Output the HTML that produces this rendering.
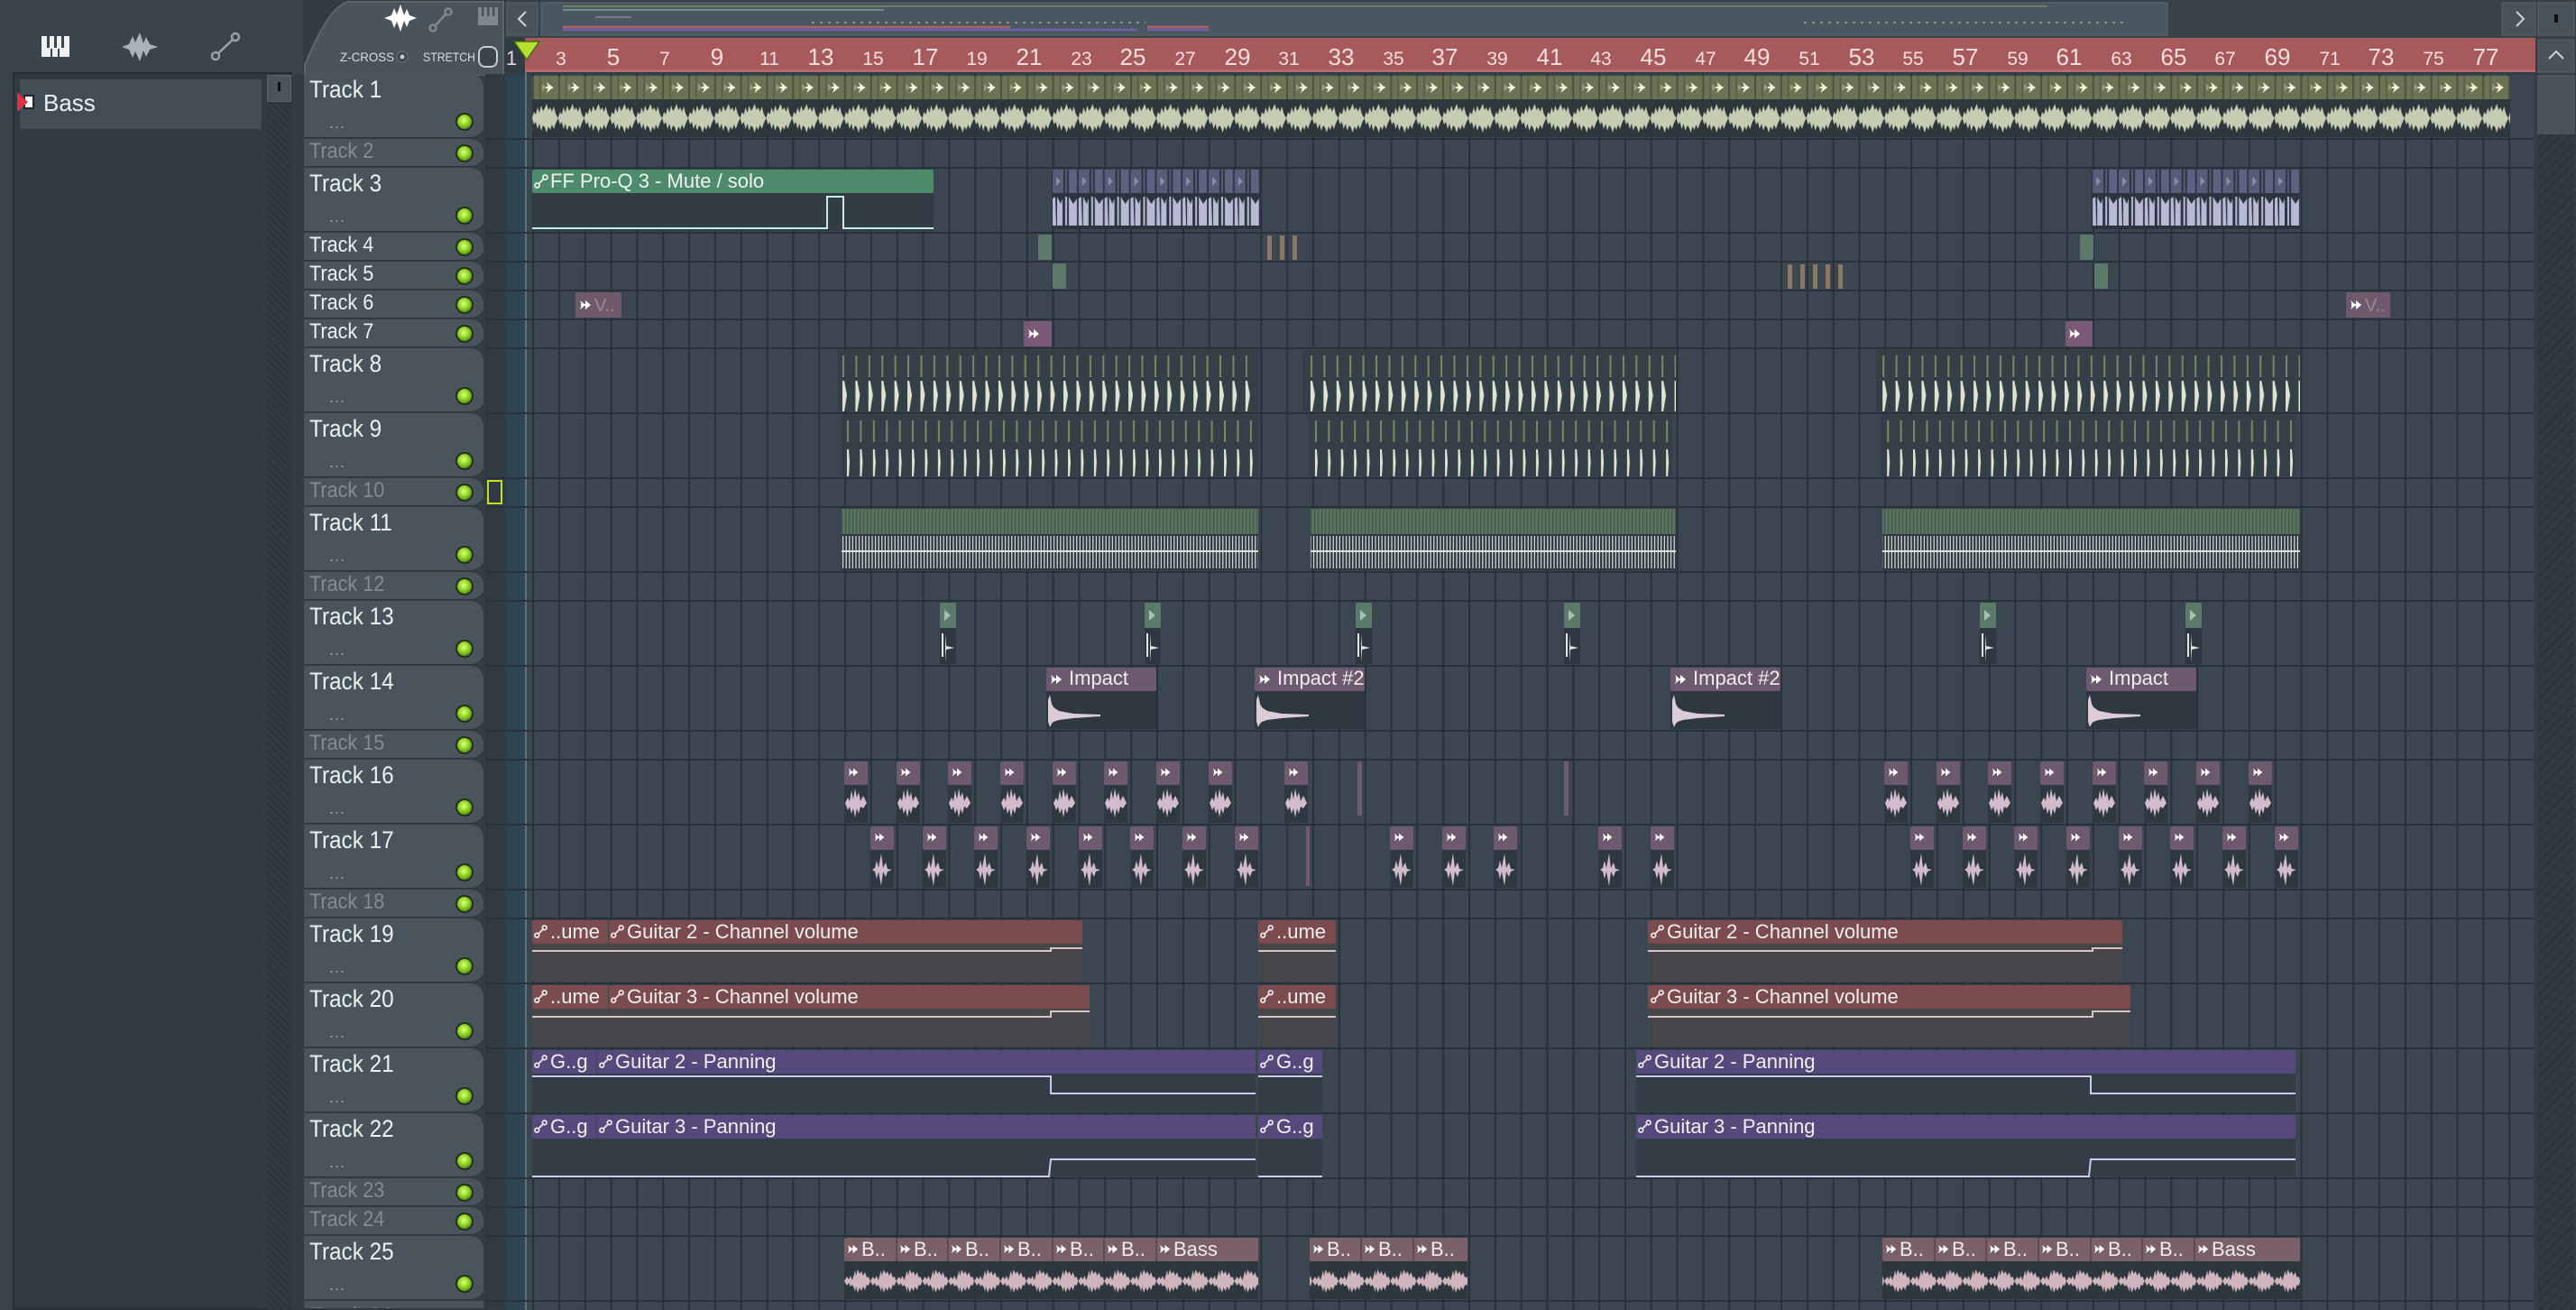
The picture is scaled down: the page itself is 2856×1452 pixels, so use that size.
<!DOCTYPE html>
<html style="overflow:hidden;width:2856px;height:1452px"><head><meta charset="utf-8">
<style>
*{margin:0;padding:0;box-sizing:border-box}
body{width:2856px;height:1452px;overflow:hidden;background:#323c45;font-family:"Liberation Sans Narrow","Liberation Sans",sans-serif;position:relative}
.a{position:absolute}
.th{position:absolute;left:337px;width:199px;background:#4a545c;border-radius:0 14px 14px 0;border-bottom:2px solid #2f383f;overflow:hidden}
.th span{position:absolute;left:6px;top:4px;font-size:27px;color:#eef0f0;line-height:1;transform:scaleX(0.9);transform-origin:0 0}
.th.s span{top:2px;font-size:24px}
.th.d span{color:#838c92}
.th i{position:absolute;left:168px;width:20px;height:20px;border-radius:50%;background:radial-gradient(circle at 45% 40%,#d8ff80 0,#9ee030 35%,#4f8a10 80%);border:2px solid #24301a}
.th b{position:absolute;left:28px;font-size:18px;color:#9aa3a8;font-weight:normal;letter-spacing:1px}
</style></head><body>
<div class="a" style="left:0;top:0;width:336px;height:82px;background:#3a444d"></div>
<div class="a" style="left:0;top:0;width:14px;height:1452px;background:#3a444d"></div>
<div class="a" style="left:14px;top:80px;width:310px;height:1372px;background:#303a43;border:2px solid #262e35"></div>
<div class="a" style="left:295px;top:82px;width:29px;height:1370px;background:repeating-linear-gradient(45deg,#2c353d 0 3px,#323b43 3px 6px)"></div>
<div class="a" style="left:296px;top:83px;width:27px;height:30px;background:#4a545c;border:1px solid #5a646c"></div>
<div class="a" style="left:308px;top:91px;width:3px;height:10px;background:#111"></div>
<div class="a" style="left:22px;top:88px;width:268px;height:55px;background:#434d56"></div>
<div class="a" style="left:48px;top:99px;font-size:26px;color:#eef0f0">Bass</div>
<div class="a" style="left:26px;top:105px;width:12px;height:16px;background:#fff;border:2px solid #222"></div>
<svg class="a" style="left:0;top:0" width="340" height="150">
<polygon points="19,102 31,113 19,124" fill="#e0304a"/>
<rect x="46" y="40" width="31" height="23" fill="#eef0f2"/>
<g fill="#3a444d"><rect x="52" y="40" width="3" height="13"/><rect x="60" y="40" width="3" height="13"/><rect x="68" y="40" width="3" height="13"/><rect x="56" y="54" width="2" height="9"/><rect x="64" y="54" width="2" height="9"/></g>
<path d="M135,52 L143,49 L147,40 L150,47 L155,36 L159,48 L162,41 L166,49 L175,52 L166,55 L162,63 L159,56 L155,68 L150,57 L147,64 L143,55 Z" fill="#aab3b8"/>
<g stroke="#98a2a8" stroke-width="2.5" fill="none"><circle cx="239" cy="62" r="4"/><circle cx="261" cy="41" r="4"/><line x1="242" y1="59" x2="258" y2="44"/></g>
</svg>
<svg class="a" style="left:330px;top:0" width="240" height="84" font-family="Liberation Sans Narrow,Liberation Sans,sans-serif">
<path d="M8,84 L8,72 Q30,18 48,6 Q52,2 60,2 L228,2 L228,84 Z" fill="#49535c" stroke="#5c666e" stroke-width="2"/>
<path d="M96,20 L104,17 L107,9 L110,16 L114,5 L118,17 L121,10 L124,17 L132,20 L124,23 L121,30 L118,23 L114,35 L110,24 L107,31 L104,23 Z" fill="#fff"/>
<g stroke="#7e888e" stroke-width="2.5" fill="none"><circle cx="150" cy="31" r="3.5"/><circle cx="167" cy="13" r="3.5"/><line x1="153" y1="28" x2="164" y2="16"/></g>
<rect x="200" y="8" width="22" height="20" fill="#7e888e"/><g fill="#49535c"><rect x="204" y="8" width="2.5" height="10"/><rect x="210" y="8" width="2.5" height="10"/><rect x="216" y="8" width="2.5" height="10"/></g>
<text x="47" y="68" font-size="14" fill="#d8dde0" textLength="60" lengthAdjust="spacingAndGlyphs">Z-CROSS</text>
<circle cx="116" cy="63" r="6" fill="#3a444c" stroke="#6c767c"/><circle cx="116" cy="63" r="2.5" fill="#c8ccd0"/>
<text x="139" y="68" font-size="14" fill="#d8dde0" textLength="58" lengthAdjust="spacingAndGlyphs">STRETCH</text>
<rect x="201" y="52" width="20" height="22" rx="7" fill="#3a444c" stroke="#c8ccd0" stroke-width="2"/>
</svg>
<div class="th" style="top:82px;height:72px"><span>Track 1</span><b style="top:44px">...</b><i style="top:43px"></i></div>
<div class="th s d" style="top:154px;height:32px"><span>Track 2</span><i style="top:6px"></i></div>
<div class="th" style="top:186px;height:72px"><span>Track 3</span><b style="top:44px">...</b><i style="top:43px"></i></div>
<div class="th s" style="top:258px;height:32px"><span>Track 4</span><i style="top:6px"></i></div>
<div class="th s" style="top:290px;height:32px"><span>Track 5</span><i style="top:6px"></i></div>
<div class="th s" style="top:322px;height:32px"><span>Track 6</span><i style="top:6px"></i></div>
<div class="th s" style="top:354px;height:32px"><span>Track 7</span><i style="top:6px"></i></div>
<div class="th" style="top:386px;height:72px"><span>Track 8</span><b style="top:44px">...</b><i style="top:43px"></i></div>
<div class="th" style="top:458px;height:72px"><span>Track 9</span><b style="top:44px">...</b><i style="top:43px"></i></div>
<div class="th s d" style="top:530px;height:32px"><span>Track 10</span><i style="top:6px"></i></div>
<div class="th" style="top:562px;height:72px"><span>Track 11</span><b style="top:44px">...</b><i style="top:43px"></i></div>
<div class="th s d" style="top:634px;height:32px"><span>Track 12</span><i style="top:6px"></i></div>
<div class="th" style="top:666px;height:72px"><span>Track 13</span><b style="top:44px">...</b><i style="top:43px"></i></div>
<div class="th" style="top:738px;height:72px"><span>Track 14</span><b style="top:44px">...</b><i style="top:43px"></i></div>
<div class="th s d" style="top:810px;height:32px"><span>Track 15</span><i style="top:6px"></i></div>
<div class="th" style="top:842px;height:72px"><span>Track 16</span><b style="top:44px">...</b><i style="top:43px"></i></div>
<div class="th" style="top:914px;height:72px"><span>Track 17</span><b style="top:44px">...</b><i style="top:43px"></i></div>
<div class="th s d" style="top:986px;height:32px"><span>Track 18</span><i style="top:6px"></i></div>
<div class="th" style="top:1018px;height:72px"><span>Track 19</span><b style="top:44px">...</b><i style="top:43px"></i></div>
<div class="th" style="top:1090px;height:72px"><span>Track 20</span><b style="top:44px">...</b><i style="top:43px"></i></div>
<div class="th" style="top:1162px;height:72px"><span>Track 21</span><b style="top:44px">...</b><i style="top:43px"></i></div>
<div class="th" style="top:1234px;height:72px"><span>Track 22</span><b style="top:44px">...</b><i style="top:43px"></i></div>
<div class="th s d" style="top:1306px;height:32px"><span>Track 23</span><i style="top:6px"></i></div>
<div class="th s d" style="top:1338px;height:32px"><span>Track 24</span><i style="top:6px"></i></div>
<div class="th" style="top:1370px;height:72px"><span>Track 25</span><b style="top:44px">...</b><i style="top:43px"></i></div>
<div class="th d" style="top:1442px;height:10px;border-radius:0"><span>Track 26</span></div>

<svg class="a" style="left:0;top:0" width="2856" height="1452" font-family="Liberation Sans Narrow,Liberation Sans,sans-serif">
<defs>
<pattern id="bars" x="561.3" y="0" width="28.83" height="20" patternUnits="userSpaceOnUse"><rect x="0" y="0" width="2" height="20" fill="#283038"/></pattern>
<pattern id="hatch" x="0" y="0" width="8" height="8" patternUnits="userSpaceOnUse" patternTransform="rotate(45)"><rect width="8" height="8" fill="#323b43"/><rect width="4" height="8" fill="#2c353d"/></pattern>
<pattern id="t1h" x="590" y="84" width="28.83" height="26" patternUnits="userSpaceOnUse"><rect width="28.83" height="26" fill="#6c7355"/><rect x="0" width="2" height="26" fill="#4c5240"/><rect x="8" width="1.5" height="26" fill="#565c46"/><polygon points="11,9 15,13 11,17" fill="#9a9e84"/><polygon points="16,7 23,13 16,19 18,13" fill="#fbf6dc"/><rect x="15" y="12" width="8" height="2" fill="#fbf6dc"/></pattern>
<pattern id="t1w" x="590" y="110" width="28.83" height="42" patternUnits="userSpaceOnUse"><rect width="28.83" height="42" fill="#2e383c"/><path d="M0,21 L2,14 4,17 6,9 8,15 10,7 12,13 14,10 16,5 18,12 20,9 22,14 24,8 26,16 28.8,21 26,27 24,33 22,28 20,34 18,30 16,37 14,31 12,29 10,35 8,27 6,33 4,25 2,28 Z" fill="#c6ccb2"/></pattern>
<pattern id="spk" x="929" y="388" width="14.415" height="68" patternUnits="userSpaceOnUse"><rect x="5" y="6" width="2" height="24" fill="#7e8660"/><path d="M5,34 L7,34 L10,50 L7,68 L5,68 Z" fill="#dfe3cf"/></pattern>
<pattern id="spk2" x="933" y="460" width="14.415" height="68" patternUnits="userSpaceOnUse"><rect x="6" y="6" width="2" height="24" fill="#7e8660"/><path d="M6,38 L8,38 L9,52 L8,68 L6,68 Z" fill="#dfe3cf"/></pattern>
<pattern id="t11h" x="933" y="564" width="4" height="28" patternUnits="userSpaceOnUse"><rect width="4" height="28" fill="#587060"/><rect width="1" height="28" fill="#465a4c"/></pattern>
<pattern id="t11w" x="933" y="594" width="3.6" height="36" patternUnits="userSpaceOnUse"><rect x="1" y="0" width="1.2" height="36" fill="#d4e4dc"/><rect x="0" y="16" width="3.6" height="2" fill="#d4e4dc"/></pattern>
<pattern id="pu" x="1166" y="188" width="28.83" height="66" patternUnits="userSpaceOnUse"><rect width="28.83" height="66" fill="#2c3440"/><rect x="1" y="0" width="12" height="26" fill="#585c78"/><rect x="15" y="0" width="2" height="26" fill="#585c78"/><rect x="19" y="0" width="9" height="26" fill="#5e6282"/><polygon points="5,8 10,13 5,18" fill="#8a8ea8"/><path d="M1,32 L4,30 L5,62 L1,62 Z M6,30 L10,38 L12,32 L12,62 L6,62 Z M15,30 L17,30 L17,62 L15,62 Z M19,30 L24,38 L28,32 L28,62 L19,62 Z" fill="#b8bad4"/></pattern>
<pattern id="bw" x="936" y="1398" width="28.83" height="42" patternUnits="userSpaceOnUse"><rect width="28.83" height="42" fill="#2e363e"/><path d="M0,22 L3,17 5,20 7,16 9,21 11,14 12,10 13,16 15,9 17,14 19,11 21,16 23,12 25,18 27,17 28.8,22 27,27 25,26 23,32 21,28 19,33 17,29 15,35 13,28 12,34 11,30 9,26 7,28 5,24 3,27 Z" fill="#cfb5bd"/></pattern>
<symbol id="lk" viewBox="0 0 16 16"><g stroke="#f0ecee" stroke-width="1.8" fill="none"><circle cx="3.5" cy="12.5" r="2.5"/><circle cx="12.5" cy="3.5" r="2.5"/><line x1="5.3" y1="10.7" x2="10.7" y2="5.3"/></g></symbol>
<symbol id="ar" viewBox="0 0 16 16"><polygon points="2,3 8,8 2,13 4,8" fill="#fff"/><polygon points="8,3 14,8 8,13" fill="#fff"/><rect x="3" y="7" width="10" height="2" fill="#fff"/></symbol>
<g id="p16"><rect x="0" y="0" width="26" height="26" rx="2" fill="#6e5a6e"/><use href="#ar" x="3" y="5" width="14" height="14"/><rect x="0" y="26" width="26" height="42" fill="#2f3740"/><path d="M1,46 L4,40 6,44 8,32 10,42 12,30 14,40 16,34 18,44 21,38 25,46 21,52 18,50 16,58 14,52 12,62 10,52 8,58 6,50 4,54 Z" fill="#d2bccc"/></g>
<g id="p17"><rect x="0" y="0" width="26" height="26" rx="2" fill="#6e5a6e"/><use href="#ar" x="3" y="5" width="14" height="14"/><rect x="0" y="26" width="26" height="42" fill="#2f3740"/><path d="M2,48 L5,46 7,38 9,46 12,30 14,46 17,40 19,47 24,48 19,50 17,56 14,50 12,66 9,50 7,58 5,50 Z" fill="#d2bccc"/></g>
<g id="p13"><rect x="0" y="0" width="18" height="28" rx="2" fill="#5b7a6a"/><polygon points="5,8 12,14 5,20" fill="#a8c0b4"/><rect x="0" y="28" width="18" height="40" fill="#2f3840"/><path d="M2,34 L4,34 4,60 2,60 Z M6,34 L7,48 16,50 7,52 6,66 Z" fill="#dbe8e2"/></g>
<g id="imp"><rect x="0" y="0" width="122" height="68" fill="#2f3740"/><rect x="0" y="0" width="122" height="26" rx="2" fill="#6c5a6e"/><use href="#ar" x="3" y="5" width="16" height="16"/><path d="M2,36 L4,30 6,40 8,44 14,48 30,51 60,52 60,54 30,56 14,58 8,60 6,62 4,66 2,60 Z" fill="#dcccd8"/></g>
</defs>
<rect x="538" y="82" width="23" height="1370" fill="#303a42"/>
<rect x="561" y="82" width="21" height="1370" fill="#2e4450"/>
<rect x="582" y="82" width="2228" height="1370" fill="#3c4650"/>
<rect x="582" y="82" width="2228" height="1370" fill="url(#bars)"/>
<line x1="583" y1="80" x2="583" y2="1452" stroke="#5a7480" stroke-width="2"/>
<g stroke="#29313a" stroke-width="2">
<line x1="538" y1="154" x2="2810" y2="154"/><line x1="538" y1="186" x2="2810" y2="186"/><line x1="538" y1="258" x2="2810" y2="258"/><line x1="538" y1="290" x2="2810" y2="290"/><line x1="538" y1="322" x2="2810" y2="322"/><line x1="538" y1="354" x2="2810" y2="354"/><line x1="538" y1="386" x2="2810" y2="386"/><line x1="538" y1="458" x2="2810" y2="458"/><line x1="538" y1="530" x2="2810" y2="530"/><line x1="538" y1="562" x2="2810" y2="562"/><line x1="538" y1="634" x2="2810" y2="634"/><line x1="538" y1="666" x2="2810" y2="666"/><line x1="538" y1="738" x2="2810" y2="738"/><line x1="538" y1="810" x2="2810" y2="810"/><line x1="538" y1="842" x2="2810" y2="842"/><line x1="538" y1="914" x2="2810" y2="914"/><line x1="538" y1="986" x2="2810" y2="986"/><line x1="538" y1="1018" x2="2810" y2="1018"/><line x1="538" y1="1090" x2="2810" y2="1090"/><line x1="538" y1="1162" x2="2810" y2="1162"/><line x1="538" y1="1234" x2="2810" y2="1234"/><line x1="538" y1="1306" x2="2810" y2="1306"/><line x1="538" y1="1338" x2="2810" y2="1338"/><line x1="538" y1="1370" x2="2810" y2="1370"/><line x1="538" y1="1442" x2="2810" y2="1442"/>
</g>
<rect x="541" y="533" width="15" height="25" fill="none" stroke="#c8e020" stroke-width="2"/>
<rect x="560" y="0" width="2296" height="42" fill="#38424b"/>
<rect x="562" y="3" width="34" height="36" fill="#48525a" stroke="#5a646c"/>
<path d="M583,13 L575,21 L583,29" stroke="#cfd4d8" stroke-width="2" fill="none"/>
<rect x="600" y="3" width="1803" height="36" fill="#4a5760" stroke="#5e6a72"/>
<g stroke-width="1.5"><line x1="624" y1="7" x2="2270" y2="7" stroke="#7a8a6a"/><line x1="624" y1="11" x2="980" y2="11" stroke="#7aa090"/><line x1="660" y1="19" x2="700" y2="19" stroke="#9080a0"/><line x1="900" y1="25" x2="1270" y2="25" stroke="#a0a890" stroke-dasharray="3 6"/><line x1="2000" y1="25" x2="2360" y2="25" stroke="#a0a890" stroke-dasharray="3 6"/><line x1="624" y1="30" x2="1120" y2="30" stroke="#b06060" stroke-width="2.5"/><line x1="624" y1="33" x2="1260" y2="33" stroke="#7060b0" stroke-width="2.5"/><line x1="1272" y1="30" x2="1340" y2="30" stroke="#b06060" stroke-width="2.5"/><line x1="1272" y1="33" x2="1340" y2="33" stroke="#7060b0" stroke-width="2.5"/></g>
<rect x="2774" y="3" width="37" height="36" fill="#48525a" stroke="#5a646c"/>
<path d="M2790,13 L2798,21 L2790,29" stroke="#cfd4d8" stroke-width="2" fill="none"/>
<rect x="2814" y="3" width="40" height="36" fill="#48525a" stroke="#5a646c"/>
<rect x="2832" y="16" width="4" height="9" fill="#111"/>
<rect x="582" y="42" width="2229" height="38" fill="#a65a5c"/>
<rect x="582" y="77" width="2229" height="3" fill="#b86a6c"/>
<text x="561" y="72" font-size="22" fill="#e8dadc">1</text>
<g fill="#f6dede" font-size="21" text-anchor="middle">
<text x="622" y="72">3</text><text x="680" y="72" font-size="26">5</text><text x="737" y="72">7</text><text x="795" y="72" font-size="26">9</text><text x="853" y="72">11</text><text x="910" y="72" font-size="26">13</text><text x="968" y="72">15</text><text x="1026" y="72" font-size="26">17</text><text x="1083" y="72">19</text><text x="1141" y="72" font-size="26">21</text><text x="1199" y="72">23</text><text x="1256" y="72" font-size="26">25</text><text x="1314" y="72">27</text><text x="1372" y="72" font-size="26">29</text><text x="1429" y="72">31</text><text x="1487" y="72" font-size="26">33</text><text x="1545" y="72">35</text><text x="1602" y="72" font-size="26">37</text><text x="1660" y="72">39</text><text x="1718" y="72" font-size="26">41</text><text x="1775" y="72">43</text><text x="1833" y="72" font-size="26">45</text><text x="1891" y="72">47</text><text x="1948" y="72" font-size="26">49</text><text x="2006" y="72">51</text><text x="2064" y="72" font-size="26">53</text><text x="2121" y="72">55</text><text x="2179" y="72" font-size="26">57</text><text x="2237" y="72">59</text><text x="2294" y="72" font-size="26">61</text><text x="2352" y="72">63</text><text x="2410" y="72" font-size="26">65</text><text x="2467" y="72">67</text><text x="2525" y="72" font-size="26">69</text><text x="2583" y="72">71</text><text x="2640" y="72" font-size="26">73</text><text x="2698" y="72">75</text><text x="2756" y="72" font-size="26">77</text>
</g>
<polygon points="570,46 598,46 584,66" fill="#b4e030" stroke="#4a6a10" stroke-width="1.5"/>
<rect x="2811" y="42" width="45" height="1410" fill="#333d45"/>
<rect x="2814" y="84" width="40" height="1368" fill="url(#hatch)"/>
<rect x="2814" y="44" width="40" height="36" fill="#48525a" stroke="#5a646c"/>
<path d="M2826,65 L2834,57 L2842,65" stroke="#cfd4d8" stroke-width="2" fill="none"/>
<rect x="2814" y="84" width="40" height="64" fill="#48525a" stroke="#5a646c"/>

<rect x="590" y="84" width="2193" height="26" fill="url(#t1h)"/>
<rect x="590" y="110" width="2193" height="42" fill="url(#t1w)"/>
<rect x="590" y="214" width="445" height="42" fill="#333c45"/>
<rect x="590" y="188" width="445" height="26" rx="2" fill="#4e8a6c"/>
<use href="#lk" x="592" y="193" width="16" height="16"/>
<text x="610" y="208" font-size="22" fill="#eef4f0">FF Pro-Q 3 - Mute / solo</text>
<polyline points="590,253 917,253 917,218 935,218 935,253 1035,253" fill="none" stroke="#c4ece0" stroke-width="2"/>
<rect x="1166" y="188" width="231" height="66" fill="url(#pu)"/>
<rect x="2319" y="188" width="231" height="66" fill="url(#pu)"/>
<rect x="1151" y="260" width="15" height="28" rx="2" fill="#5b7a6a"/><rect x="2306" y="260" width="15" height="28" rx="2" fill="#5b7a6a"/>
<rect x="1167" y="292" width="15" height="28" rx="2" fill="#5b7a6a"/><rect x="2322" y="292" width="15" height="28" rx="2" fill="#5b7a6a"/>
<g fill="#8a7866"><rect x="1405" y="261" width="5" height="27"/><rect x="1419" y="261" width="5" height="27"/><rect x="1433" y="261" width="5" height="27"/><rect x="1982" y="293" width="5" height="27"/><rect x="1996" y="293" width="5" height="27"/><rect x="2010" y="293" width="5" height="27"/><rect x="2024" y="293" width="5" height="27"/><rect x="2038" y="293" width="5" height="27"/></g>
<rect x="638" y="324" width="51" height="28" rx="2" fill="#6e5a6c"/><use href="#ar" x="641" y="330" width="16" height="16"/><text x="659" y="345" font-size="20" fill="#9a8a98">V..</text>
<rect x="2601" y="324" width="49" height="28" rx="2" fill="#6e5a6c"/><use href="#ar" x="2604" y="330" width="16" height="16"/><text x="2622" y="345" font-size="20" fill="#9a8a98">V..</text>
<rect x="1135" y="356" width="31" height="28" rx="2" fill="#7a5a76"/><use href="#ar" x="1138" y="362" width="16" height="16"/>
<rect x="2290" y="356" width="30" height="28" rx="2" fill="#7a5a76"/><use href="#ar" x="2292" y="362" width="16" height="16"/>
<rect x="929" y="388" width="466" height="68" fill="#353f47"/><rect x="929" y="388" width="466" height="68" fill="url(#spk)"/>
<rect x="1444" y="388" width="414" height="68" fill="#353f47"/><rect x="1444" y="388" width="414" height="68" fill="url(#spk)"/>
<rect x="2080" y="388" width="470" height="68" fill="#353f47"/><rect x="2080" y="388" width="470" height="68" fill="url(#spk)"/>
<rect x="933" y="460" width="462" height="68" fill="#353f47"/><rect x="933" y="460" width="462" height="68" fill="url(#spk2)"/>
<rect x="1450" y="460" width="404" height="68" fill="#353f47"/><rect x="1450" y="460" width="404" height="68" fill="url(#spk2)"/>
<rect x="2085" y="460" width="460" height="68" fill="#353f47"/><rect x="2085" y="460" width="460" height="68" fill="url(#spk2)"/>
<g><rect x="933" y="564" width="462" height="28" fill="url(#t11h)"/><rect x="933" y="592" width="462" height="40" fill="#2f3840"/><rect x="933" y="594" width="462" height="36" fill="url(#t11w)"/>
<rect x="1453" y="564" width="405" height="28" fill="url(#t11h)"/><rect x="1453" y="592" width="405" height="40" fill="#2f3840"/><rect x="1453" y="594" width="405" height="36" fill="url(#t11w)"/>
<rect x="2087" y="564" width="463" height="28" fill="url(#t11h)"/><rect x="2087" y="592" width="463" height="40" fill="#2f3840"/><rect x="2087" y="594" width="463" height="36" fill="url(#t11w)"/></g>
<use href="#p13" x="1042" y="668"/><use href="#p13" x="1269" y="668"/><use href="#p13" x="1503" y="668"/><use href="#p13" x="1734" y="668"/><use href="#p13" x="2195" y="668"/><use href="#p13" x="2423" y="668"/>
<use href="#imp" x="1160" y="740"/><text x="1185" y="759" font-size="22" fill="#f2eaf0">Impact</text>
<use href="#imp" x="1391" y="740"/><text x="1416" y="759" font-size="22" fill="#f2eaf0">Impact #2</text>
<use href="#imp" x="1852" y="740"/><text x="1877" y="759" font-size="22" fill="#f2eaf0">Impact #2</text>
<use href="#imp" x="2313" y="740"/><text x="2338" y="759" font-size="22" fill="#f2eaf0">Impact</text>
<use href="#p16" x="936" y="844"/><use href="#p16" x="994" y="844"/><use href="#p16" x="1051" y="844"/><use href="#p16" x="1109" y="844"/><use href="#p16" x="1167" y="844"/><use href="#p16" x="1224" y="844"/><use href="#p16" x="1282" y="844"/><use href="#p16" x="1340" y="844"/>
<use href="#p16" x="1424" y="844"/><rect x="1505" y="844" width="5" height="60" fill="#6e5a6e"/><rect x="1734" y="844" width="5" height="60" fill="#6e5a6e"/>
<use href="#p16" x="2089" y="844"/><use href="#p16" x="2147" y="844"/><use href="#p16" x="2204" y="844"/><use href="#p16" x="2262" y="844"/><use href="#p16" x="2320" y="844"/><use href="#p16" x="2377" y="844"/><use href="#p16" x="2435" y="844"/><use href="#p16" x="2493" y="844"/>
<use href="#p17" x="965" y="916"/><use href="#p17" x="1023" y="916"/><use href="#p17" x="1080" y="916"/><use href="#p17" x="1138" y="916"/><use href="#p17" x="1196" y="916"/><use href="#p17" x="1253" y="916"/><use href="#p17" x="1311" y="916"/><use href="#p17" x="1369" y="916"/>
<rect x="1448" y="916" width="4" height="66" fill="#6e5a6e"/><use href="#p17" x="1541" y="916"/><use href="#p17" x="1599" y="916"/><use href="#p17" x="1656" y="916"/><use href="#p17" x="1772" y="916"/><use href="#p17" x="1830" y="916"/>
<use href="#p17" x="2118" y="916"/><use href="#p17" x="2176" y="916"/><use href="#p17" x="2233" y="916"/><use href="#p17" x="2291" y="916"/><use href="#p17" x="2349" y="916"/><use href="#p17" x="2406" y="916"/><use href="#p17" x="2464" y="916"/><use href="#p17" x="2522" y="916"/>
<g fill="#454649"><rect x="590" y="1046" width="610" height="42"/><rect x="1395" y="1046" width="86" height="42"/><rect x="1827" y="1046" width="526" height="42"/>
<rect x="590" y="1118" width="618" height="42"/><rect x="1395" y="1118" width="86" height="42"/><rect x="1827" y="1118" width="535" height="42"/></g>
<g fill="#7a4c4e"><rect x="590" y="1020" width="84" height="26" rx="2"/><rect x="675" y="1020" width="525" height="26" rx="2"/><rect x="1395" y="1020" width="86" height="26" rx="2"/><rect x="1827" y="1020" width="526" height="26" rx="2"/>
<rect x="590" y="1092" width="84" height="26" rx="2"/><rect x="675" y="1092" width="533" height="26" rx="2"/><rect x="1395" y="1092" width="86" height="26" rx="2"/><rect x="1827" y="1092" width="535" height="26" rx="2"/></g>
<g fill="none" stroke="#d8c4c4" stroke-width="2"><polyline points="590,1054 1165,1054 1165,1051 1200,1051"/><polyline points="1395,1054 1481,1054"/><polyline points="1827,1054 2320,1054 2320,1051 2353,1051"/>
<polyline points="590,1127 1165,1127 1165,1121 1208,1121"/><polyline points="1395,1127 1481,1127"/><polyline points="1827,1127 2320,1127 2320,1121 2362,1121"/></g>
<g fill="#343c46"><rect x="590" y="1190" width="802" height="42"/><rect x="1395" y="1190" width="71" height="42"/><rect x="1814" y="1190" width="731" height="42"/>
<rect x="590" y="1262" width="802" height="42"/><rect x="1395" y="1262" width="71" height="42"/><rect x="1814" y="1262" width="731" height="42"/></g>
<g fill="#564a7c"><rect x="590" y="1164" width="71" height="26" rx="2"/><rect x="662" y="1164" width="730" height="26" rx="2"/><rect x="1395" y="1164" width="71" height="26" rx="2"/><rect x="1814" y="1164" width="731" height="26" rx="2"/>
<rect x="590" y="1236" width="71" height="26" rx="2"/><rect x="662" y="1236" width="730" height="26" rx="2"/><rect x="1395" y="1236" width="71" height="26" rx="2"/><rect x="1814" y="1236" width="731" height="26" rx="2"/></g>
<g fill="none" stroke="#cfc8ec" stroke-width="2"><polyline points="590,1193 1165,1193 1165,1212 1392,1212"/><polyline points="1395,1193 1466,1193"/><polyline points="1814,1193 2318,1193 2318,1212 2545,1212"/>
<polyline points="590,1304 1163,1304 1165,1285 1392,1285"/><polyline points="1395,1304 1466,1304"/><polyline points="1814,1304 2316,1304 2318,1285 2545,1285"/></g>
<g font-size="22" fill="#f2eef0">
<use href="#lk" x="592" y="1025" width="15" height="15"/><text x="610" y="1040">..ume</text><use href="#lk" x="677" y="1025" width="15" height="15"/><text x="695" y="1040">Guitar 2 - Channel volume</text>
<use href="#lk" x="1397" y="1025" width="15" height="15"/><text x="1415" y="1040">..ume</text><use href="#lk" x="1830" y="1025" width="15" height="15"/><text x="1848" y="1040">Guitar 2 - Channel volume</text>
<use href="#lk" x="592" y="1097" width="15" height="15"/><text x="610" y="1112">..ume</text><use href="#lk" x="677" y="1097" width="15" height="15"/><text x="695" y="1112">Guitar 3 - Channel volume</text>
<use href="#lk" x="1397" y="1097" width="15" height="15"/><text x="1415" y="1112">..ume</text><use href="#lk" x="1830" y="1097" width="15" height="15"/><text x="1848" y="1112">Guitar 3 - Channel volume</text>
<use href="#lk" x="592" y="1169" width="15" height="15"/><text x="610" y="1184">G..g</text><use href="#lk" x="664" y="1169" width="15" height="15"/><text x="682" y="1184">Guitar 2 - Panning</text>
<use href="#lk" x="1397" y="1169" width="15" height="15"/><text x="1415" y="1184">G..g</text><use href="#lk" x="1816" y="1169" width="15" height="15"/><text x="1834" y="1184">Guitar 2 - Panning</text>
<use href="#lk" x="592" y="1241" width="15" height="15"/><text x="610" y="1256">G..g</text><use href="#lk" x="664" y="1241" width="15" height="15"/><text x="682" y="1256">Guitar 3 - Panning</text>
<use href="#lk" x="1397" y="1241" width="15" height="15"/><text x="1415" y="1256">G..g</text><use href="#lk" x="1816" y="1241" width="15" height="15"/><text x="1834" y="1256">Guitar 3 - Panning</text>
</g>
<g><rect x="936" y="1398" width="459" height="42" fill="url(#bw)"/><rect x="1452" y="1398" width="175" height="42" fill="url(#bw)"/><rect x="2087" y="1398" width="463" height="42" fill="url(#bw)"/></g>
<g fill="#7a6068"><rect x="936" y="1372" width="459" height="26" rx="2"/><rect x="1452" y="1372" width="175" height="26" rx="2"/><rect x="2087" y="1372" width="463" height="26" rx="2"/></g>
<g stroke="#5e4a52" stroke-width="2"><line x1="994" y1="1372" x2="994" y2="1398"/><line x1="1051" y1="1372" x2="1051" y2="1398"/><line x1="1109" y1="1372" x2="1109" y2="1398"/><line x1="1167" y1="1372" x2="1167" y2="1398"/><line x1="1224" y1="1372" x2="1224" y2="1398"/><line x1="1282" y1="1372" x2="1282" y2="1398"/><line x1="1509" y1="1372" x2="1509" y2="1398"/><line x1="1567" y1="1372" x2="1567" y2="1398"/><line x1="2145" y1="1372" x2="2145" y2="1398"/><line x1="2202" y1="1372" x2="2202" y2="1398"/><line x1="2260" y1="1372" x2="2260" y2="1398"/><line x1="2318" y1="1372" x2="2318" y2="1398"/><line x1="2375" y1="1372" x2="2375" y2="1398"/><line x1="2433" y1="1372" x2="2433" y2="1398"/></g>
<g font-size="22" fill="#f2eaee">
<use href="#ar" x="938" y="1377" width="15" height="15"/><text x="955" y="1392">B..</text><use href="#ar" x="996" y="1377" width="15" height="15"/><text x="1013" y="1392">B..</text><use href="#ar" x="1053" y="1377" width="15" height="15"/><text x="1070" y="1392">B..</text><use href="#ar" x="1111" y="1377" width="15" height="15"/><text x="1128" y="1392">B..</text><use href="#ar" x="1169" y="1377" width="15" height="15"/><text x="1186" y="1392">B..</text><use href="#ar" x="1226" y="1377" width="15" height="15"/><text x="1243" y="1392">B..</text><use href="#ar" x="1284" y="1377" width="15" height="15"/><text x="1301" y="1392">Bass</text>
<use href="#ar" x="1454" y="1377" width="15" height="15"/><text x="1471" y="1392">B..</text><use href="#ar" x="1511" y="1377" width="15" height="15"/><text x="1528" y="1392">B..</text><use href="#ar" x="1569" y="1377" width="15" height="15"/><text x="1586" y="1392">B..</text>
<use href="#ar" x="2089" y="1377" width="15" height="15"/><text x="2106" y="1392">B..</text><use href="#ar" x="2147" y="1377" width="15" height="15"/><text x="2164" y="1392">B..</text><use href="#ar" x="2204" y="1377" width="15" height="15"/><text x="2221" y="1392">B..</text><use href="#ar" x="2262" y="1377" width="15" height="15"/><text x="2279" y="1392">B..</text><use href="#ar" x="2320" y="1377" width="15" height="15"/><text x="2337" y="1392">B..</text><use href="#ar" x="2377" y="1377" width="15" height="15"/><text x="2394" y="1392">B..</text><use href="#ar" x="2435" y="1377" width="15" height="15"/><text x="2452" y="1392">Bass</text>
</g>
</svg>
</body></html>
